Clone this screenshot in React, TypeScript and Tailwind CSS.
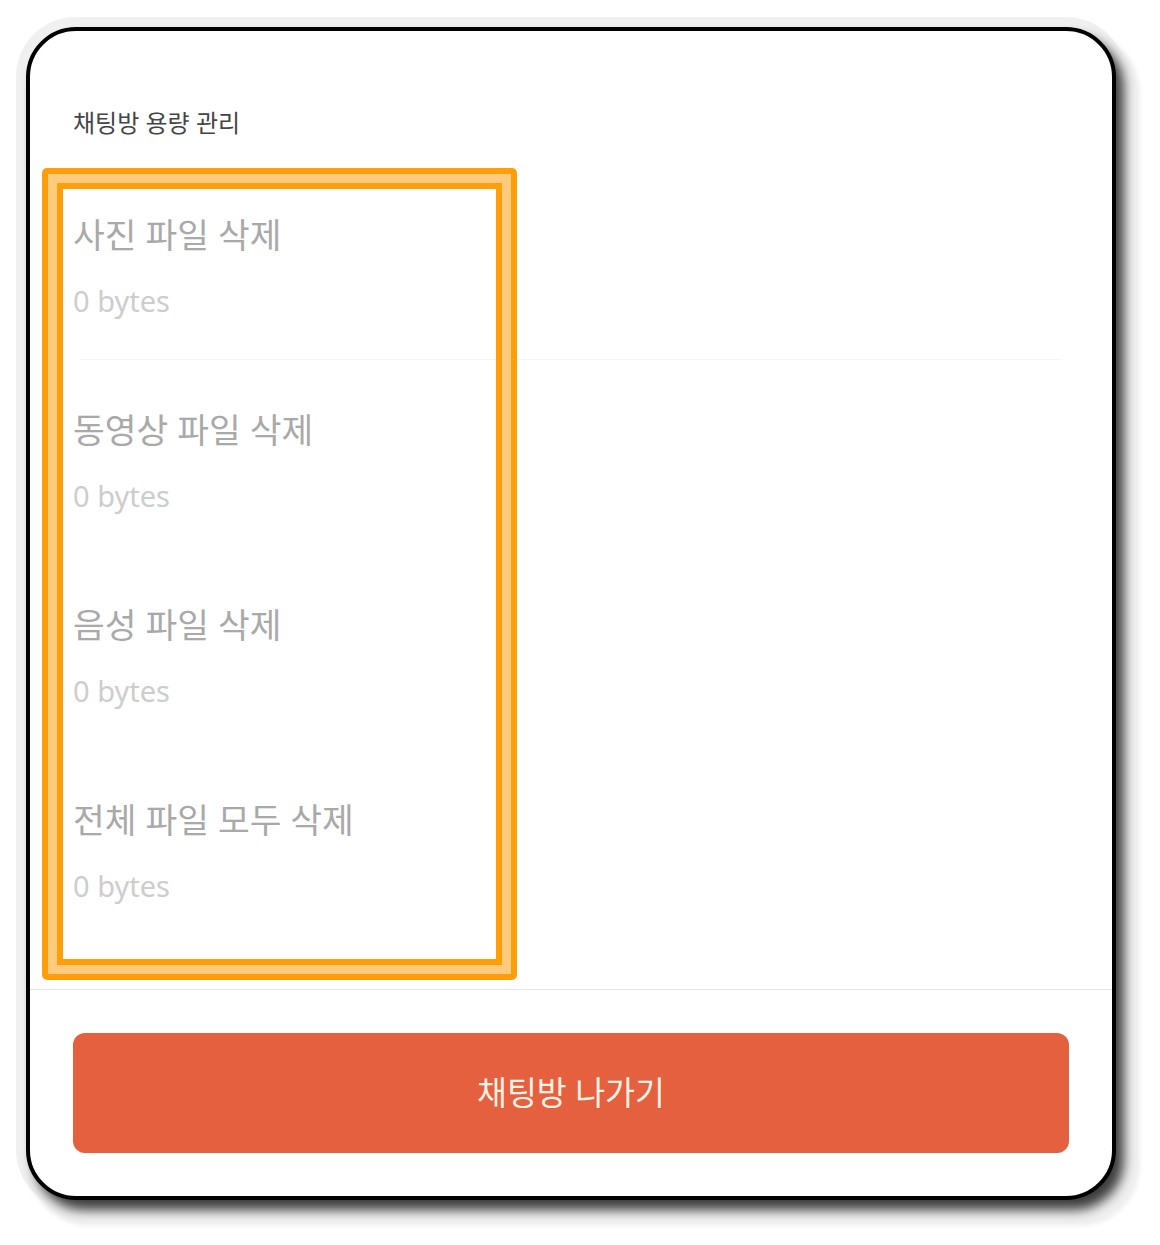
import React from 'react';

const items = [
  { title: '사진 파일 삭제', size: '0 bytes', divider: true },
  { title: '동영상 파일 삭제', size: '0 bytes', divider: false },
  { title: '음성 파일 삭제', size: '0 bytes', divider: false },
  { title: '전체 파일 모두 삭제', size: '0 bytes', divider: false },
];

function StorageItem({ title, size, divider }: { title: string; size: string; divider: boolean }) {
  return (
    <div className="flex flex-col">
      <div className="flex h-[194px] flex-col px-[43px] pt-[48px]">
        <div className="text-[34.5px] leading-[44px] text-[#a9a9a9]">{title}</div>
        <div className="mt-[26px] text-[29px] leading-[36px] text-[#cdcdcd]">{size}</div>
      </div>
      <div className={divider ? 'mx-[50px] h-px bg-[#f6f6f6]' : 'h-px'}></div>
    </div>
  );
}

export default function App() {
  return (
    <div className="h-[1245px] w-[1160px] bg-white pl-[26px] pt-[27px] font-['Noto_Sans','Noto_Sans_CJK_KR',sans-serif]">
      <div className="relative flex h-[1173px] w-[1090px] flex-col rounded-[50px] border-4 border-black bg-white shadow-[8px_10px_12px_rgba(0,0,0,0.75),0_0_0_10px_#f0f0f0,14px_16px_4px_10px_#f0f0f0]">
        <div className="h-[135px] px-[43px] pt-[76px]">
          <div className="text-[24px] leading-[32px] text-[#454545]">채팅방 용량 관리</div>
        </div>

        <div className="flex flex-col pb-[44px]">
          {items.map((item) => (
            <StorageItem key={item.title} {...item} />
          ))}
        </div>

        <div className="border-t border-[#e6e6e6] p-[43px]">
          <button className="flex h-[120px] w-full items-center justify-center rounded-[12px] bg-[#e4603f] text-[32.5px] text-[#fff3e8]">
            채팅방 나가기
          </button>
        </div>

        {/* highlight annotation */}
        <div className="absolute left-[12px] top-[137px] h-[812px] w-[475px] rounded-[5px] border-[6px] border-[#ff9e0b]">
          <div className="h-full w-full border-[9px] border-[#ffcb7c]">
            <div className="h-full w-full border-[6px] border-[#ff9e0b]"></div>
          </div>
        </div>
      </div>
    </div>
  );
}
